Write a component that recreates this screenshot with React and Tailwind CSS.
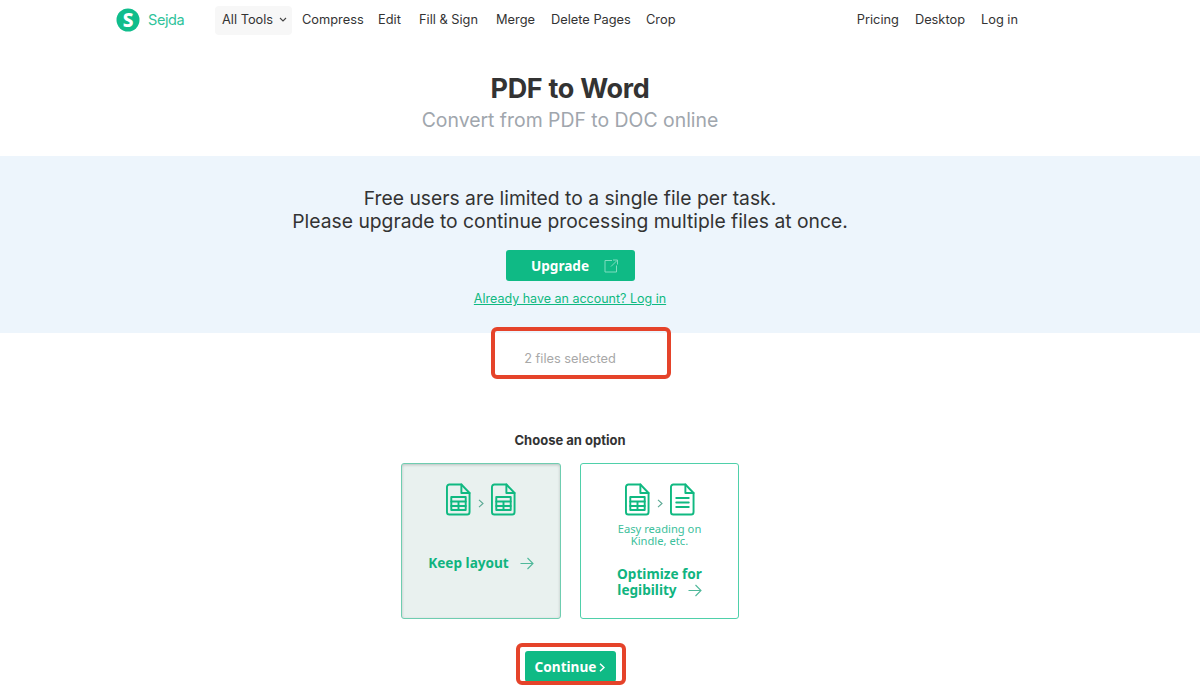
import React from "react";

const FONT = "font-['Inter','Liberation_Sans',sans-serif]";
const NOTO = "font-['Noto_Sans','Liberation_Sans',sans-serif]";

function SheetIcon({ lines = false }) {
  return (
    <svg width="25" height="33" viewBox="0 0 26 33" preserveAspectRatio="none" fill="none" stroke="#10b981" strokeWidth="2" strokeLinejoin="round" strokeLinecap="round">
      <path d="M3.5 1.5H16L24.5 10V29A2.5 2.5 0 0 1 22 31.5H3.5A2.5 2.5 0 0 1 1 29V4A2.5 2.5 0 0 1 3.5 1.5Z" />
      <path d="M16 1.5V10H24.5" />
      {lines ? (
        <path d="M6.5 15H19.5M6.5 19.5H19.5M6.5 24H19.5" />
      ) : (
        <>
          <rect x="5.5" y="14" width="15" height="13" />
          <path d="M5.5 18.5H20.5M5.5 23H20.5M13 18.5V27" />
        </>
      )}
    </svg>
  );
}

function Chevron({ className = "", sw = 1.1 }) {
  return (
    <svg className={className} width="6" height="9" viewBox="0 0 6 9" fill="none" stroke="currentColor" strokeWidth={sw}>
      <path d="M1 .8 5 4.5 1 8.2" />
    </svg>
  );
}

function Arrow() {
  return (
    <svg width="14" height="13" viewBox="0 0 14 13" fill="none" stroke="#4fb89a" strokeWidth="1.1">
      <path d="M0.5 6.5H13M7.5 1 13 6.5 7.5 12" />
    </svg>
  );
}

export default function App() {
  return (
    <div className={`${FONT} w-[1200px] h-[695px] overflow-hidden bg-white relative text-[#333]`}>
      <nav className="h-[39px] flex items-center text-[12.8px] text-[#333]">
        <div className="ml-[116px] flex items-center w-[99px] gap-[8px]">
          <svg width="24" height="24" viewBox="0 0 24 24">
            <circle cx="12" cy="12" r="11.5" fill="#10bd8c" />
            <text x="12" y="18.5" textAnchor="middle" fontSize="19" fontWeight="800" fill="#fff" fontFamily="Noto Sans, sans-serif">S</text>
          </svg>
          <span className="text-[#2fc39b] text-[14.5px] tracking-[-0.4px]">Sejda</span>
        </div>
        <div className="w-[77px] h-[29px] rounded-[4px] bg-[#f7f7f7] flex items-center pl-[7px] gap-[6px] mt-[1px]">
          <span>All Tools</span>
          <svg width="8" height="6" viewBox="0 0 8 6" fill="none" stroke="#444" strokeWidth="1.1"><path d="M1 1 4 4 7 1" /></svg>
        </div>
        <div className="flex ml-[10px]">
          <span className="w-[76px]">Compress</span>
          <span className="w-[41px]">Edit</span>
          <span className="w-[77px]">Fill &amp; Sign</span>
          <span className="w-[55px]">Merge</span>
          <span className="w-[95px]">Delete Pages</span>
          <span>Crop</span>
        </div>
        <div className="flex ml-auto mr-[182px] gap-[16px]">
          <span>Pricing</span>
          <span>Desktop</span>
          <span>Log in</span>
        </div>
      </nav>

      <div className="w-[1140px] text-center pt-[34px]">
        <h1 className="text-[27px] leading-[32px] font-bold text-[#333] tracking-[-0.3px]">PDF to Word</h1>
        <p className="text-[19.4px] leading-[30px] text-[#a0a6ad]">Convert from PDF to DOC online</p>
      </div>

      <section className="mt-[21px] h-[177px] bg-[#edf5fc]">
        <div className="w-[1140px] flex flex-col items-center pt-[31px]">
          <p className="text-[19.3px] leading-[23px] text-center text-[#333]">
            Free users are limited to a single file per task.
            <br />
            Please upgrade to continue processing multiple files at once.
          </p>
          <button className={`${NOTO} mt-[17px] w-[129px] h-[31px] rounded-[3px] bg-[#0fba85] text-white text-[13.6px] font-bold flex items-center justify-center gap-[15px] pl-[9px] pt-[1px]`}>
            <span>Upgrade</span>
            <svg width="14" height="14" viewBox="0 0 14 14" fill="none" stroke="#7fdcbf" strokeWidth="1">
              <path d="M8 1.5H1V13H12.5V6.5M7 7.5 13 1.5M9 1H13.5V5.5" />
            </svg>
          </button>
          <a className="mt-[9px] text-[12.5px] leading-[18px] text-[#10b981] underline">Already have an account? Log in</a>
        </div>
      </section>

      <div className="w-[1140px] text-center mt-[17px] text-[12.8px] leading-[18px] text-[#a8a8a8]">2 files selected</div>

      <div className="w-[1140px] text-center mt-[63px] text-[13px] leading-[18px] font-bold text-[#333]">Choose an option</div>

      <div className="w-[1140px] flex justify-center gap-[19px] mt-[14px]">
        <div className="w-[160px] h-[156px] rounded-[3px] border border-[#6fcdb0] bg-[#e9f1ef] shadow-[inset_0_1px_3px_rgba(0,0,0,0.2)] flex flex-col items-center pt-[19px]">
          <div className="flex items-center gap-[7px]">
            <SheetIcon />
            <Chevron className="text-[#5aa893] mt-[8px]" />
            <SheetIcon />
          </div>
          <div className={`${NOTO} mt-[39px] flex items-center gap-[11px] text-[13.6px] leading-[16px] font-bold text-[#10b47f]`}>
            <span>Keep layout</span>
            <Arrow />
          </div>
        </div>
        <div className="w-[159px] h-[156px] rounded-[3px] border border-[#4fd0aa] bg-white flex flex-col items-center pt-[19px]">
          <div className="flex items-center gap-[7px]">
            <SheetIcon />
            <Chevron className="text-[#5aa893] mt-[8px]" />
            <SheetIcon lines />
          </div>
          <p className={`${NOTO} mt-[7px] text-[11.2px] leading-[12px] text-center text-[#3cc09b]`}>Easy reading on<br />Kindle, etc.</p>
          <div className={`${NOTO} mt-[19px] text-[13.6px] leading-[16px] font-bold text-[#10b47f] text-center`}>
            <div>Optimize for</div>
            <div className="flex items-center justify-center gap-[11px]"><span>legibility</span><Arrow /></div>
          </div>
        </div>
      </div>

      <div className="w-[1140px] flex justify-center mt-[32px]">
        <button className={`${NOTO} w-[91px] h-[31px] rounded-[3px] bg-[#0fba85] text-white text-[13.6px] font-bold flex items-center justify-center gap-[3px] pt-[1px]`}>
          <span>Continue</span>
          <Chevron sw={1.5} />
        </button>
      </div>

      <div className="absolute left-[491px] top-[327px] w-[180px] h-[52px] rounded-[6px] border-[4px] border-[#e5432a]" />
      <div className="absolute left-[516px] top-[643px] w-[110px] h-[42px] rounded-[6px] border-[4px] border-[#e5432a]" />
    </div>
  );
}
